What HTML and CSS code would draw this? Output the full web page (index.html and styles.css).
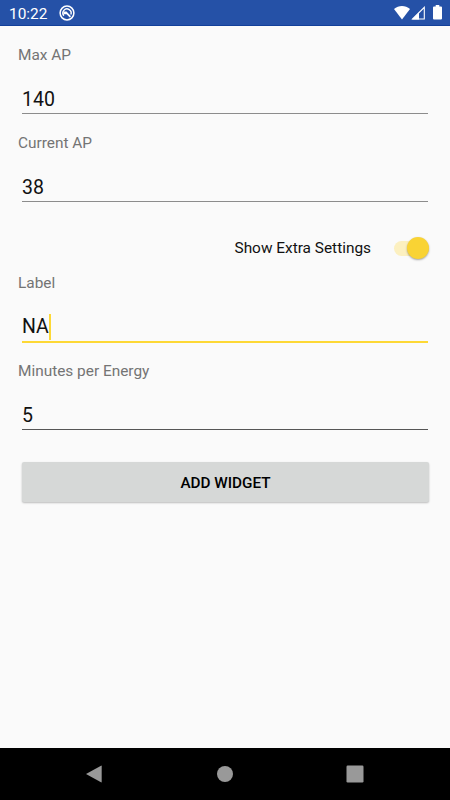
FILE: index.html
```
<!DOCTYPE html>
<html lang="en">
<head>
    <meta charset="UTF-8">
    <meta name="viewport" content="width=device-width, initial-scale=1.0">
    <title>Add Widget</title>
    <link rel="stylesheet" href="styles.css">
</head>
<body>
    <header class="status-bar">
        <span class="clock">10:22</span>
        <svg class="notification" width="16" height="16" viewBox="0 0 16 16">
            <circle cx="8" cy="8" r="6.9" fill="none" stroke="#fff" stroke-width="1.5"/>
            <path d="M4.9 10.7A4.1 4.1 0 1 1 11.8 9.6" fill="none" stroke="#fff" stroke-width="1.4"/>
            <path d="M4.4 6.6H7.5L12 11.2L10.8 12.4L7.6 9.3L4.6 9.2Z" fill="#fff"/>
        </svg>
        <div class="status-icons">
            <svg width="16" height="14" viewBox="0 0 16 14">
                <path d="M0 3C4.6-.9 11.4-.9 16 3L8 13.4Z" fill="#fff"/>
            </svg>
            <svg class="signal" width="14" height="14" viewBox="0 0 14 14">
                <path d="M1.6 13L13.3 1.3V13Z" fill="none" stroke="#fff" stroke-width="1.1"/>
                <path d="M1 13.4L8 6.4V13.4Z" fill="#fff"/>
            </svg>
            <svg class="battery" width="9" height="15" viewBox="0 0 9 15">
                <path d="M2.7 0H6.3V1.5H8Q9 1.5 9 2.5V13.5Q9 14.5 8 14.5H1Q0 14.5 0 13.5V2.5Q0 1.5 1 1.5H2.7Z" fill="#fff"/>
            </svg>
        </div>
    </header>

    <main class="settings">
        <div class="field">
            <label>Max AP</label>
            <div class="input">140</div>
        </div>
        <div class="field">
            <label>Current AP</label>
            <div class="input">38</div>
        </div>

        <div class="switch-row">
            <span>Show Extra Settings</span>
            <div class="switch"><div class="thumb"></div></div>
        </div>

        <div class="field">
            <label>Label</label>
            <div class="input focused">NA<span class="cursor"></span></div>
        </div>
        <div class="field">
            <label>Minutes per Energy</label>
            <div class="input dark">5</div>
        </div>

        <button class="add-button">ADD WIDGET</button>
    </main>

    <nav class="nav-bar">
        <svg width="18" height="18" viewBox="0 0 18 18">
            <path d="M1 9L16 .7Q16.7 .4 16.7 1.2V16.8Q16.7 17.6 16 17.3Z" fill="#999"/>
        </svg>
        <svg width="18" height="18" viewBox="0 0 18 18">
            <circle cx="9" cy="9" r="8" fill="#999"/>
        </svg>
        <svg width="18" height="18" viewBox="0 0 18 18">
            <rect x=".5" y=".5" width="17" height="17" rx="1.2" fill="#999"/>
        </svg>
    </nav>
</body>
</html>
```
FILE: styles.css
```
* {
    box-sizing: border-box;
}

body {
    margin: 0;
    height: 100vh;
    display: flex;
    flex-direction: column;
    background-color: #fafafa;
    color: #111;
    font-family: Roboto, sans-serif;
    font-size: 15.4px;
    overflow: hidden;
}

svg {
    display: block;
}

.status-bar {
    height: 26px;
    flex: none;
    display: flex;
    align-items: center;
    padding: 0 8px 0 9px;
    background-color: #2551a7;
    border-bottom: 1px solid #12409a;
    color: #fff;
}

.clock {
    width: 50px;
    padding-top: 3px;
}

.status-icons {
    display: flex;
    margin-left: auto;
    align-items: center;
}

.signal {
    margin-left: 1px;
}

.battery {
    margin-left: 8px;
}

.settings {
    flex: 1;
    padding: 19px 18px 0;
}

.field {
    height: 88px;
}

.field label {
    display: block;
    height: 20px;
    line-height: 20px;
    color: #747474;
}

.input {
    display: flex;
    align-items: center;
    height: 49px;
    margin: 0 4px;
    padding-top: 20px;
    border-bottom: 1px solid #8c8c8c;
    font-size: 19.5px;
}

.input.focused {
    height: 50px;
    padding-top: 19px;
    border-bottom: 2px solid #fdd835;
}

.input.dark {
    border-bottom-color: #555;
}

.cursor {
    width: 2px;
    height: 26px;
    background-color: #fdd835;
}

.switch-row {
    display: flex;
    justify-content: flex-end;
    align-items: center;
    height: 52px;
    padding-top: 2px;
}

.switch {
    display: flex;
    justify-content: flex-end;
    align-items: center;
    width: 35px;
    height: 15px;
    margin: 0 3px 0 23px;
    border-radius: 8px;
    background-color: #fcf0c0;
}

.thumb {
    flex: none;
    width: 22px;
    height: 22px;
    border-radius: 50%;
    background-color: #f9d334;
    box-shadow: 0 1px 2px rgba(0, 0, 0, 0.35);
}

.add-button {
    display: block;
    width: 407px;
    height: 40px;
    margin: 13px 0 0 4px;
    padding: 2px 0 0;
    border: none;
    border-radius: 2px;
    background-color: #d6d8d7;
    box-shadow: 0 1px 2px rgba(0, 0, 0, 0.25);
    color: #000;
    font-family: inherit;
    font-size: 15.3px;
    font-weight: 500;
}

.nav-bar {
    height: 52px;
    flex: none;
    display: flex;
    justify-content: space-between;
    align-items: center;
    padding: 0 86px 0 85px;
    background-color: #000;
}
```
